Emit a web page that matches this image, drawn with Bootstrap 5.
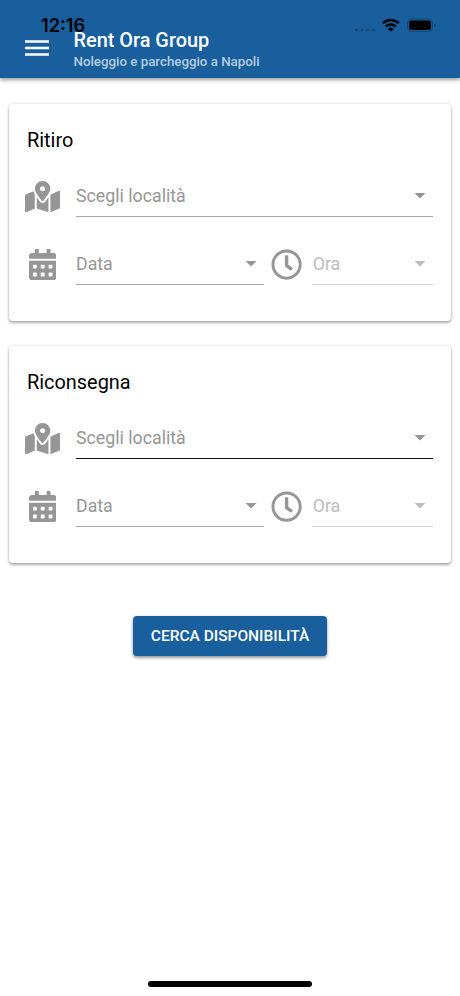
<!DOCTYPE html>
<html lang="it">
<head>
<meta charset="utf-8">
<meta name="viewport" content="width=device-width, initial-scale=1">
<title>Rent Ora Group</title>
<link href="https://cdn.jsdelivr.net/npm/bootstrap@5.3.0/dist/css/bootstrap.min.css" rel="stylesheet">
<style>
  body { font-family: Roboto, "Liberation Sans", sans-serif; background: #fff; color: #000; }
  .screen { height: 996px; }
  .topbar { height: 78px; background: #195f9e; padding: 29px 25px 0; box-shadow: 0 2px 4px rgba(0,0,0,.3), 0 1px 5px rgba(0,0,0,.15); }
  .menu-btn { width: 24px; height: 18px; margin: 9px 24.500px 0 0; }
  .menu-btn svg, .glyph svg { display: block; }
  .app-title { font-size: 19.900px; line-height: 24px; font-weight: 500; }
  .app-sub { font-size: 13.300px; line-height: 18px; font-weight: 500; color: #b5cde1; }
  .status { inset: 0 0 auto 0; height: 50px; color: #000; }
  .status-time { left: 41px; top: 14px; font: 600 18.200px/22px Inter, sans-serif; }
  .status-icons { left: 354px; top: 17px; }
  .content { padding-top: 26px; }
  .panels { gap: 26px; margin-bottom: 54px; }
  .panel { width: 442px; height: 216.500px; border-radius: 4px; padding: 0 18px; margin-bottom: -.5px; box-shadow: 0 2px 3px rgba(0,0,0,.3), 0 0 3px rgba(0,0,0,.16); }
  .panel-title { font-size: 19.900px; line-height: 24px; height: 69px; padding-top: 25px; }
  .fields { gap: 24px; }
  .glyph { color: #969696; padding-top: 3px; }
  .glyph-lead { width: 49px; padding-right: 18px; }
  .glyph-time { width: 48px; padding-right: 2px; }
  .picker { height: 44px; border: 0; border-bottom: 1px solid #a8a8a8; color: #969696; font-size: 17.750px; line-height: 24px; padding: 3px 7.500px 0 0; background: none; }
  .picker-date { width: 188px; flex: none; }
  .picker.current { border-bottom-color: #111; }
  .picker.inactive { color: #bdbdbd; border-bottom-color: #d2d2d2; padding-left: .7px; }
  .search-btn { width: 194px; height: 40px; background: #195f9e; color: #fff; border-radius: 4px; font-size: 15.500px; line-height: 20px; font-weight: 500; box-shadow: 0 2px 3px rgba(0,0,0,.32), 0 1px 4px rgba(0,0,0,.15); }
  .home-bar { width: 164px; height: 6px; border-radius: 3px; background: #000; margin-bottom: 9px; }
</style>
</head>
<body>
<svg class="d-none">
  <symbol id="i-map" viewBox="0 0 576 512"><path fill="currentColor" d="M288 0c-69.590 0-126 56.410-126 126 0 56.260 82.350 158.800 113.900 196.020 6.390 7.540 17.820 7.540 24.200 0C331.650 284.800 414 182.260 414 126 414 56.410 357.590 0 288 0zm0 168c-23.200 0-42-18.800-42-42s18.800-42 42-42 42 18.800 42 42-18.800 42-42 42zM20.120 215.950A32 32 0 0 0 0 245.660v250.320c0 11.320 11.430 19.060 21.940 14.860L160 448V214.920c-8.840-15.980-16.070-31.540-21.250-46.420L20.120 215.950zM288 359.670c-14.070 0-27.380-6.180-36.510-16.960-19.660-23.200-40.570-49.620-59.490-76.720v182l192 64V266c-18.920 27.090-39.820 53.520-59.490 76.720-9.130 10.770-22.440 16.950-36.510 16.950zm266.060-198.510L416 224v288l139.880-55.950A32 32 0 0 0 576 426.340V176.020c0-11.320-11.430-19.060-21.940-14.860z"/></symbol>
  <symbol id="i-cal" viewBox="0 0 448 512"><path fill="currentColor" fill-rule="evenodd" d="M0 464c0 26.500 21.500 48 48 48h352c26.500 0 48-21.500 48-48V192H0zM76 256h40q12 0 12 12v40q0 12-12 12H76q-12 0-12-12v-40q0-12 12-12zM204 256h40q12 0 12 12v40q0 12-12 12h-40q-12 0-12-12v-40q0-12 12-12zM332 256h40q12 0 12 12v40q0 12-12 12h-40q-12 0-12-12v-40q0-12 12-12zM76 384h40q12 0 12 12v40q0 12-12 12H76q-12 0-12-12v-40q0-12 12-12zM204 384h40q12 0 12 12v40q0 12-12 12h-40q-12 0-12-12v-40q0-12 12-12zM332 384h40q12 0 12 12v40q0 12-12 12h-40q-12 0-12-12v-40q0-12 12-12zM400 64h-48V16c0-8.800-7.200-16-16-16h-32c-8.800 0-16 7.200-16 16v48H160V16c0-8.800-7.200-16-16-16h-32c-8.800 0-16 7.200-16 16v48H48C21.500 64 0 85.500 0 112v48h448v-48c0-26.500-21.500-48-48-48z"/></symbol>
  <symbol id="i-clock" viewBox="0 0 512 512"><path fill="currentColor" d="M256 8C119 8 8 119 8 256s111 248 248 248 248-111 248-248S393 8 256 8zm0 448c-110.500 0-200-89.500-200-200S145.500 56 256 56s200 89.500 200 200-89.500 200-200 200zm61.800-104.400l-84.900-61.700c-3.100-2.300-4.900-5.900-4.900-9.700V116c0-6.600 5.400-12 12-12h32c6.600 0 12 5.400 12 12v141.700l66.800 48.600c5.400 3.900 6.500 11.400 2.600 16.800L334.600 349c-3.900 5.300-11.400 6.500-16.800 2.600z"/></symbol>
  <symbol id="i-caret" viewBox="0 0 12 6"><path fill="currentColor" d="M.5 0h11L6 5.600z"/></symbol>
</svg>
<div class="screen d-flex flex-column align-items-center position-relative overflow-hidden">
  <header class="topbar w-100 d-flex align-items-start text-white">
    <button class="menu-btn btn p-0 border-0 text-white" aria-label="Menu"><svg width="24" height="18" viewBox="0 0 24 18"><path d="M0 3.500h24M0 10h24M0 16.500h24" stroke="currentColor" stroke-width="2.500"/></svg></button>
    <div>
      <div class="app-title">Rent Ora Group</div>
      <div class="app-sub">Noleggio e parcheggio a Napoli</div>
    </div>
  </header>
  <div class="status position-absolute">
    <span class="status-time position-absolute">12:16</span>
    <svg class="status-icons position-absolute" width="84" height="17" viewBox="0 0 84 17">
      <g fill="#154b79"><circle cx="2.500" cy="13" r="1.500"/><circle cx="8.200" cy="13" r="1.500"/><circle cx="13.900" cy="13" r="1.500"/><circle cx="19.500" cy="13" r="1.500"/></g>
      <g fill="none" stroke="#000" stroke-width="2.500"><path d="M28.900 6.200a11.200 11.200 0 0 1 15.800 0"/><path d="M31.900 9.500a7 7 0 0 1 9.800 0"/></g>
      <path d="M33.900 11.900a4.200 4.200 0 0 1 5.800 0l-2.900 2.900z"/>
      <rect x="53.500" y="2" width="25" height="12.500" rx="3.800" fill="none" stroke="#124673"/>
      <rect x="55" y="3.600" width="22" height="9.300" rx="2.300"/>
      <path d="M80 6.300q1.700 .5 1.700 2t-1.700 2z" fill="#124673"/>
    </svg>
  </div>

  <main class="content flex-grow-1 d-flex flex-column align-items-center">
    <div class="panels d-flex flex-column">
      <section class="panel bg-white">
        <h2 class="panel-title fw-normal mb-0">Ritiro</h2>
        <div class="fields d-flex flex-column">
          <div class="d-flex align-items-center">
            <span class="glyph glyph-lead d-flex justify-content-center flex-shrink-0"><svg class="flex-shrink-0" width="35.200" height="31.300"><use href="#i-map"/></svg></span>
            <button class="picker flex-grow-1 d-flex align-items-center justify-content-between">Scegli località<svg width="12" height="6"><use href="#i-caret"/></svg></button>
          </div>
          <div class="d-flex align-items-center">
            <span class="glyph glyph-lead d-flex justify-content-center flex-shrink-0"><svg class="flex-shrink-0" width="27.400" height="31.300"><use href="#i-cal"/></svg></span>
            <button class="picker picker-date d-flex align-items-center justify-content-between">Data<svg width="12" height="6"><use href="#i-caret"/></svg></button>
            <span class="glyph glyph-time d-flex justify-content-center flex-shrink-0"><svg width="31.200" height="31.200"><use href="#i-clock"/></svg></span>
            <button class="picker inactive flex-grow-1 d-flex align-items-center justify-content-between">Ora<svg width="12" height="6"><use href="#i-caret"/></svg></button>
          </div>
        </div>
      </section>

      <section class="panel bg-white">
        <h2 class="panel-title fw-normal mb-0">Riconsegna</h2>
        <div class="fields d-flex flex-column">
          <div class="d-flex align-items-center">
            <span class="glyph glyph-lead d-flex justify-content-center flex-shrink-0"><svg class="flex-shrink-0" width="35.200" height="31.300"><use href="#i-map"/></svg></span>
            <button class="picker current flex-grow-1 d-flex align-items-center justify-content-between">Scegli località<svg width="12" height="6"><use href="#i-caret"/></svg></button>
          </div>
          <div class="d-flex align-items-center">
            <span class="glyph glyph-lead d-flex justify-content-center flex-shrink-0"><svg class="flex-shrink-0" width="27.400" height="31.300"><use href="#i-cal"/></svg></span>
            <button class="picker picker-date d-flex align-items-center justify-content-between">Data<svg width="12" height="6"><use href="#i-caret"/></svg></button>
            <span class="glyph glyph-time d-flex justify-content-center flex-shrink-0"><svg width="31.200" height="31.200"><use href="#i-clock"/></svg></span>
            <button class="picker inactive flex-grow-1 d-flex align-items-center justify-content-between">Ora<svg width="12" height="6"><use href="#i-caret"/></svg></button>
          </div>
        </div>
      </section>
    </div>

    <button class="search-btn btn border-0 p-0 text-uppercase">Cerca disponibilità</button>
  </main>
  <div class="home-bar"></div>
</div>
<script src="https://cdn.jsdelivr.net/npm/bootstrap@5.3.0/dist/js/bootstrap.bundle.min.js"></script>
</body>
</html>
